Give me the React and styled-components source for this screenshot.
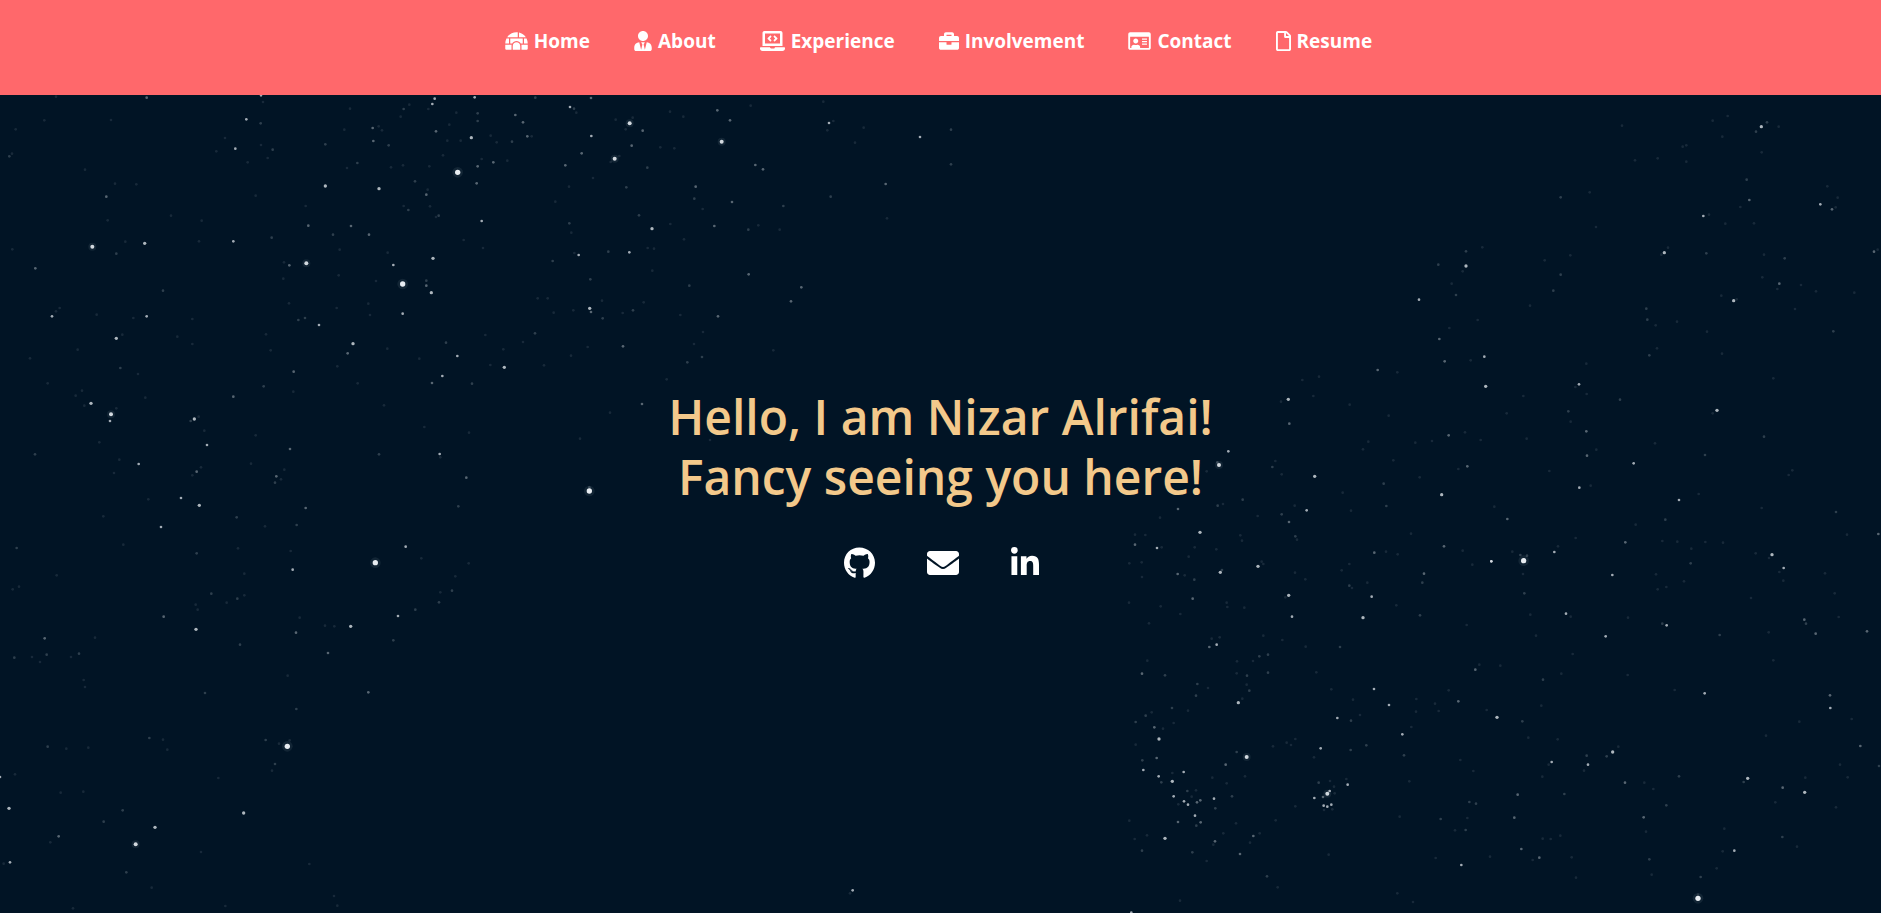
import React from "react";
import styled, { createGlobalStyle } from "styled-components";
import {
  FaIgloo,
  FaUserTie,
  FaLaptopCode,
  FaBriefcase,
  FaRegIdCard,
  FaRegFile,
  FaGithub,
  FaEnvelope,
  FaLinkedinIn,
} from "react-icons/fa";

const GlobalStyle = createGlobalStyle`
  *, *::before, *::after { box-sizing: border-box; }
  body {
    margin: 0;
    background: #011425;
    font-family: "Segoe UI", "Open Sans", "Noto Sans", sans-serif;
  }
`;

const Page = styled.div`
  display: flex;
  flex-direction: column;
  min-height: 100vh;
`;

const Header = styled.header`
  background: #ff686b;
  padding: 26px 16px 39px;
`;

const NavList = styled.ul`
  display: flex;
  flex-wrap: wrap;
  justify-content: center;
  gap: 12px 44px;
  margin: 0;
  padding: 0 4px 0 0;
  list-style: none;
`;

const NavLink = styled.a`
  display: flex;
  align-items: center;
  gap: 6px;
  color: #fff;
  font-size: 19px;
  font-weight: 700;
  line-height: 30px;
  text-decoration: none;

  svg {
    flex: none;
    width: ${(props) => props.$iconWidth}px;
    height: 20px;
  }
`;

const Hero = styled.main`
  position: relative;
  flex: 1;
  display: flex;
  flex-direction: column;
  align-items: center;
  justify-content: center;
  padding: 24px 16px 66px;
  overflow: hidden;
`;

const Sky = styled.svg`
  position: absolute;
  inset: 0;
  width: 100%;
  height: 100%;
`;

const Greeting = styled.h1`
  position: relative;
  margin: 0;
  color: #f3c98b;
  font-size: 48px;
  font-weight: 600;
  line-height: 60px;
  text-align: center;
`;

const SocialList = styled.ul`
  position: relative;
  display: flex;
  align-items: center;
  gap: 52px;
  margin: 40px 0 0;
  padding: 0 0 0 2px;
  list-style: none;
`;

const SocialLink = styled.a`
  display: block;
  color: #fff;

  svg {
    display: block;
    width: ${(props) => props.$iconWidth}px;
    height: 32px;
  }
`;

/* Star chart: each sector has its own origin and is plotted at three units
   to the pixel. Every entry is "x,y,magnitude", 1 faintest to 7 brightest. */
const SECTORS = [
  {
    x: 0,
    y: -5,
    stars:
      "440,23,3 783,16,4 789,36,1 739,88,4 782,100,2 706,176,4 818,179,2 803,204,1 675,144,1 649,184,1 743,217,1 783,165,1 133,91,1 333,90,1 168,20,1 47,118,1 28,199,2 36,191,1 255,239,1 319,320,3 409,283,1 345,281,1 323,391,1 277,470,6 434,460,5 349,491,2 376,455,1 106,535,3 37,478,1 156,679,4 179,654,1 168,664,1 290,674,1 400,684,1 440,679,4 349,745,5 367,734,1 489,602,2 577,687,1 532,740,1 577,762,1 233,779,1 90,805,1 361,834,2 605,392,1 513,377,1 597,454,1 700,454,4 815,443,2 767,317,1 917,348,1 976,288,5 976,163,2 1033,119,1 1118,114,3 1136,109,1 1146,121,1 1120,153,3 1166,166,2 1072,219,2 1041,234,1 1137,296,5 1173,232,1 1209,226,1 1245,274,2 1288,229,1 1329,196,1 1308,124,3 1304,26,4 1297,42,4 1285,57,1 1211,57,2 1228,44,1 1202,80,1 1050,56,1 1369,68,1 1424,22,4 1433,70,2 1433,93,2 1348,104,1 1342,152,1 1382,152,1 1414,143,5 1373,247,7 1433,229,3 1430,280,3 1279,314,3 1283,299,1 1290,349,1 1211,348,1 1225,360,2 1308,381,1 1316,377,2 925,407,3 1053,408,3 999,434,2 1107,434,3 1019,479,1 1163,488,1 1180,525,4 1299,505,5 1391,450,1 919,520,6 852,517,1 868,526,3 850,566,1 1016,556,1 1128,573,1 1208,582,7 1279,572,2 1279,587,3 1294,608,5 1208,671,4 867,640,1 1010,654,1 1105,641,1 1110,675,1 895,690,2 915,684,2 957,705,4 1059,761,5 1043,790,3 1012,829,1 798,733,1 812,781,1 1162,776,1 1258,806,1 1338,758,2 1372,798,4",
  },
  {
    x: 0,
    y: 275,
    stars:
      "881,5,3 414,12,1 143,40,1 246,62,1 227,77,1 436,83,1 791,49,2 880,65,1 700,80,3 273,100,5 333,133,6 330,153,4 349,115,1 253,107,1 583,147,5 572,153,2 596,140,1 613,182,1 298,217,1 105,253,2 358,269,1 342,309,1 416,282,4 621,225,4 590,305,3 603,292,1 577,316,1 543,384,4 598,406,5 483,471,4 445,388,1 310,439,1 370,524,1 50,534,2 590,550,2 710,442,2 795,469,1 714,535,1 767,196,1 753,281,1 853,299,1 829,319,3 825,338,2 843,328,1 870,237,3 917,414,3 890,465,2 872,543,1 878,599,4 1152,106,1 1137,253,2 1073,40,1 1296,39,3 1327,18,4 1416,41,2 1273,171,1 1407,188,1 1319,252,4 1321,262,1 1399,323,3 1375,409,2 1217,530,4 1126,578,7 1264,565,1 1406,580,1 1366,619,1 1356,662,2 1321,667,1 1317,697,2 1246,719,2 1194,738,4 1052,769,5 1003,769,1 975,767,1 1180,811,2 888,788,3 899,743,1 733,611,1 733,676,1 712,686,2 680,698,1 634,671,2 587,704,1 593,719,1 588,778,5 491,740,3 170,616,1 57,650,1 38,658,1 134,805,3 285,803,1 720,824,2",
  },
  {
    x: 0,
    y: 545,
    stars:
      "43,53,2 96,51,1 140,44,2 120,66,1 237,41,2 213,51,1 984,39,3 1105,157,3 615,159,2 889,207,2 863,107,1 255,141,1 251,120,1 448,294,2 489,299,1 502,329,1 143,320,2 199,326,1 265,323,1 797,300,2 837,311,1 862,319,7 869,301,1 825,372,2 816,392,1 655,414,1 0,411,4 45,403,1 27,505,5 182,458,1 250,455,1 368,511,2 311,545,2 465,562,5 731,519,5 407,613,6 176,589,3 151,607,1 30,667,4 11,671,1 379,697,2 455,743,1 676,798,1 219,805,1 603,636,1 928,672,1 1002,768,1 1012,797,1",
  },
  {
    x: 480,
    y: -5,
    stars:
      "166,23,2 333,24,3 270,51,4 282,56,2 289,68,1 106,75,3 129,97,3 142,139,3 155,139,1 96,155,2 50,157,1 32,137,1 40,217,3 82,212,1 5,207,1 449,100,6 458,83,1 437,118,1 488,122,3 334,138,4 455,167,3 305,190,3 256,226,3 404,206,6 418,198,1 392,216,1 502,233,2 541,172,1 583,175,1 570,65,1 610,80,1 407,89,1 339,264,1 267,290,1 439,292,2 226,335,1 712,61,3 750,91,3 725,155,6 812,47,1 1030,35,1 1047,99,4 1060,93,1 1042,121,1 1151,113,1 1125,158,1 1320,141,4 1413,119,2 1413,223,2 1217,282,3 826,225,3 849,238,3 647,290,3 643,326,2 756,336,3 668,357,1 910,348,2 1052,320,2 1221,385,1 477,376,2 516,416,5 571,402,1 268,400,2 274,428,1 612,448,1 703,408,3 805,419,2 835,406,1 899,419,1 5,393,4 9,474,1 296,495,4 283,489,1 385,485,2 448,487,4 503,474,1 522,476,1 218,513,2 517,542,1 331,568,2 173,625,1 203,625,1 329,655,5 333,666,3 221,668,1 280,661,1 366,632,1 368,685,2 428,669,1 459,661,2 491,637,1 628,587,2 806,553,3 964,592,3 933,634,3 714,679,3 601,675,1 669,726,1 642,762,1 666,801,2 622,817,2 429,769,3 323,771,1 165,730,2 129,756,1 16,735,1 70,778,1 273,797,1 73,832,5 31,825,1 192,826,1 880,781,1 328,1203,7 328,1192,2 486,942,3 390,968,1 300,1046,1 560,868,1 690,1050,1 1118,2401,4 1110,2410,1",
  },
  {
    x: 1100,
    y: 545,
    stars:
      "328,21,3 350,14,4 142,62,1 126,101,3 195,106,2 292,132,2 288,167,2 324,144,1 478,49,2 504,44,2 459,63,1 411,64,1 410,100,1 441,107,2 504,98,2 440,134,1 448,152,2 415,188,5 427,176,1 216,204,2 155,217,1 137,227,2 107,246,2 163,262,3 264,212,1 221,249,1 189,266,1 177,297,5 107,314,1 127,361,2 170,354,3 130,390,4 176,409,4 184,427,2 217,424,5 217,399,1 251,396,4 410,336,2 440,351,6 377,374,3 337,413,1 435,409,1 380,430,1 221,469,4 262,453,2 288,451,1 252,484,4 264,494,4 291,487,3 301,481,3 235,493,1 275,470,1 342,476,4 346,505,2 396,469,2 285,527,4 302,547,3 289,557,2 234,546,3 195,595,5 141,586,1 104,597,1 88,542,1 126,632,2 277,637,2 345,604,3 340,614,1 370,580,1 408,550,1 460,588,3 479,580,1 450,608,1 420,642,3 320,663,1 501,709,2 533,742,1 240,782,1 94,818,4 617,20,1 720,21,2 649,97,1 694,148,1 822,147,4 867,195,4 712,234,4 753,242,2 780,225,1 759,179,1 662,325,4 752,330,2 799,316,2 907,283,4 934,261,1 912,346,2 560,308,1 573,315,1 586,297,1 519,319,1 642,352,1 743,434,4 739,417,1 656,428,2 690,423,1 682,461,6 689,453,4 669,471,3 643,474,4 702,440,1 671,497,4 682,500,4 694,494,4 672,510,1 697,508,1 704,460,1 586,499,1 527,541,1 686,644,1 928,424,1 949,177,1 948,215,1 1005,191,1 1016,213,1 1046,151,1 1075,184,3 1126,89,3 1138,74,1 1191,232,5 1160,210,1 1120,393,1 1081,360,1 1108,486,2 1128,491,2 1102,534,1 1097,570,2 1065,571,1 1022,537,2 899,530,1 1007,654,1 1084,675,4 892,760,1 939,786,1",
  },
  {
    x: 1400,
    y: -5,
    stars:
      "1084,110,5 1101,97,2 1068,125,2 1136,110,1 938,92,1 983,78,1 967,140,1 859,166,1 848,170,1 773,205,1 859,215,1 1085,187,1 705,211,1 666,107,1 1040,269,2 1048,330,3 1021,351,1 910,378,4 927,374,1 1062,400,1 976,401,1 1261,343,4 1296,358,3 1282,289,1 1313,323,1 1307,352,1 482,322,2 569,307,1 588,411,1 793,488,5 804,473,1 784,494,1 919,490,2 1092,494,1 1154,505,2 1138,581,3 1132,597,1 1087,562,1 1203,585,1 1248,604,1 1363,608,1 1422,485,3 1433,479,1 1001,632,5 1010,628,1 964,617,1 1185,657,1 1300,724,2 921,725,1 966,791,1 831,695,1 739,656,2 742,689,2 767,706,1 748,796,2 771,775,1 198,484,2 198,528,5 188,544,1 115,524,2 247,472,1 57,629,4 168,615,2 155,581,1 148,714,1 118,747,3 134,814,3 253,800,4 212,811,1 434,511,1 511,496,1 482,554,2 460,602,2 390,647,1 233,690,1 559,821,1 1120,865,1",
  },
  {
    x: 1100,
    y: 275,
    stars:
      "565,88,5 543,95,1 568,161,3 640,78,1 657,20,1 607,30,1 833,0,3 892,7,1 749,104,1 866,137,1 1157,49,5 1046,196,3 1095,187,1 1142,210,1 996,213,1 946,218,1 805,215,1 789,238,1 385,244,4 357,285,6 352,277,2 320,304,1 517,291,2 526,273,1 545,313,1 644,319,5 620,421,4 584,407,1 545,433,2 567,456,3 586,499,2 591,509,1 428,389,2 353,407,2 369,402,1 234,417,3 473,438,1 180,443,1 105,494,1 105,524,3 136,495,1 171,534,4 185,532,1 300,487,5 266,560,1 284,532,1 125,577,1 88,580,1 126,621,1 233,612,3 254,616,1 283,629,2 349,538,1 421,496,1 426,512,1 361,607,5 366,600,2 474,589,5 485,575,1 490,582,1 616,628,1 585,608,1 566,676,5 556,682,1 576,740,4 380,698,1 382,711,1 433,713,1 278,686,3 182,709,1 241,732,1 147,760,1 87,698,1 753,422,1 728,368,1 851,341,2 859,408,2 880,271,1 959,322,1 1102,289,3 1075,297,1 1025,374,5 933,491,1 1032,529,3 1088,542,1 823,548,3 858,545,1 893,553,1 725,601,1 748,582,1 748,647,2 756,654,1 802,638,1 815,680,4 789,743,5 967,638,2 972,611,3 960,736,2 889,706,1 1100,765,1 1174,574,4 1117,584,1 359,802,1 335,806,1 490,797,1 547,810,1",
  },
  {
    x: 1480,
    y: 285,
    stars:
      "297,13,4 286,21,1 320,42,1 420,59,2 130,48,1 80,100,1 265,94,2 272,125,1 319,154,3 140,176,1 321,227,3 349,209,1 461,250,4 298,323,4 332,317,1 208,273,1 711,91,5 698,100,1 852,170,2 675,225,2 525,190,1 597,360,4 656,342,1 556,419,2 467,434,1 436,487,3 287,474,1 223,516,4 234,499,1 131,542,7 121,525,2 141,527,2 129,582,1 133,640,2 34,544,4 97,515,1 43,380,1 82,417,3 397,585,4 547,483,1 592,485,1 676,486,1 729,488,1 634,506,1 632,550,2 528,583,1 559,621,1 533,628,1 612,604,1 258,701,4 272,710,1 151,704,1 168,767,1 377,769,4 278,822,1 560,736,4 547,731,2 719,765,2 444,713,1 876,524,5 867,534,1 911,564,4 898,576,1 910,602,1 827,520,1 813,654,1 1035,580,1 1064,640,1 1068,396,2 1101,464,1 1195,462,3 937,271,1 926,285,1 973,719,3 978,731,2 1007,761,3 1161,754,3 1076,711,1 866,757,1 845,384,1",
  },
  {
    x: 1480,
    y: 545,
    stars:
      "61,77,1 189,119,2 244,101,1 184,197,1 127,244,2 145,293,1 233,298,1 215,366,4 206,374,1 320,347,2 324,374,4 312,392,1 398,336,5 380,349,2 415,320,1 187,410,1 253,462,2 113,464,3 103,533,3 124,627,3 178,653,3 158,660,1 188,596,1 212,597,1 241,587,1 275,652,1 288,713,1 30,650,1 435,428,3 493,428,1 520,447,1 597,409,2 559,496,2 491,532,3 498,575,1 508,658,2 515,704,1 584,150,1 674,160,4 443,105,1 803,415,5 791,426,2 908,443,3 974,457,5 886,487,1 976,413,1 1103,412,1 1080,374,1 1197,378,2 1141,318,3 1051,204,4 1050,166,3 1115,237,1 958,245,1 858,287,1 880,61,1 1068,502,1 907,591,2 951,620,1 763,632,4 728,634,1 733,566,1 710,685,1 662,711,2 654,775,7 654,764,1",
  },
];

const MAGNITUDES = {
  1: { r: 4, opacity: 0.1 },
  2: { r: 4, opacity: 0.2 },
  3: { r: 4, opacity: 0.38 },
  4: { r: 4, opacity: 0.7 },
  5: { r: 5, opacity: 0.75 },
  6: { r: 6, opacity: 0.9 },
  7: { r: 8, opacity: 1 },
};

function Star({ entry }) {
  const [cx, cy, magnitude] = entry.split(",").map(Number);
  const { r, opacity } = MAGNITUDES[magnitude];
  return (
    <>
      {magnitude > 5 && <circle cx={cx} cy={cy} r={r * 2} opacity="0.08" />}
      <circle cx={cx} cy={cy} r={r} opacity={opacity} />
    </>
  );
}

function StarField() {
  return (
    <Sky viewBox="0 0 1881 818" preserveAspectRatio="xMidYMid slice" aria-hidden="true">
      {SECTORS.map((sector) => (
        <g
          key={`${sector.x} ${sector.y}`}
          transform={`translate(${sector.x} ${sector.y}) scale(${1 / 3})`}
          fill="#e8edf2"
        >
          {sector.stars.split(" ").map((entry) => (
            <Star key={entry} entry={entry} />
          ))}
        </g>
      ))}
    </Sky>
  );
}

const NAV_ITEMS = [
  { label: "Home", Icon: FaIgloo, iconWidth: 23 },
  { label: "About", Icon: FaUserTie, iconWidth: 18 },
  { label: "Experience", Icon: FaLaptopCode, iconWidth: 25 },
  { label: "Involvement", Icon: FaBriefcase, iconWidth: 20 },
  { label: "Contact", Icon: FaRegIdCard, iconWidth: 23 },
  { label: "Resume", Icon: FaRegFile, iconWidth: 15 },
];

const SOCIAL_ITEMS = [
  { label: "GitHub", href: "#github", Icon: FaGithub, iconWidth: 31 },
  { label: "Email", href: "#email", Icon: FaEnvelope, iconWidth: 32 },
  { label: "LinkedIn", href: "#linkedin", Icon: FaLinkedinIn, iconWidth: 28 },
];

export default function App() {
  return (
    <Page>
      <GlobalStyle />
      <Header>
        <nav>
          <NavList>
            {NAV_ITEMS.map(({ label, Icon, iconWidth }) => (
              <li key={label}>
                <NavLink href={`#${label.toLowerCase()}`} $iconWidth={iconWidth}>
                  <Icon aria-hidden="true" />
                  {label}
                </NavLink>
              </li>
            ))}
          </NavList>
        </nav>
      </Header>
      <Hero>
        <StarField />
        <Greeting>
          Hello, I am Nizar Alrifai!
          <br />
          Fancy seeing you here!
        </Greeting>
        <SocialList>
          {SOCIAL_ITEMS.map(({ label, href, Icon, iconWidth }) => (
            <li key={label}>
              <SocialLink href={href} aria-label={label} $iconWidth={iconWidth}>
                <Icon aria-hidden="true" />
              </SocialLink>
            </li>
          ))}
        </SocialList>
      </Hero>
    </Page>
  );
}
